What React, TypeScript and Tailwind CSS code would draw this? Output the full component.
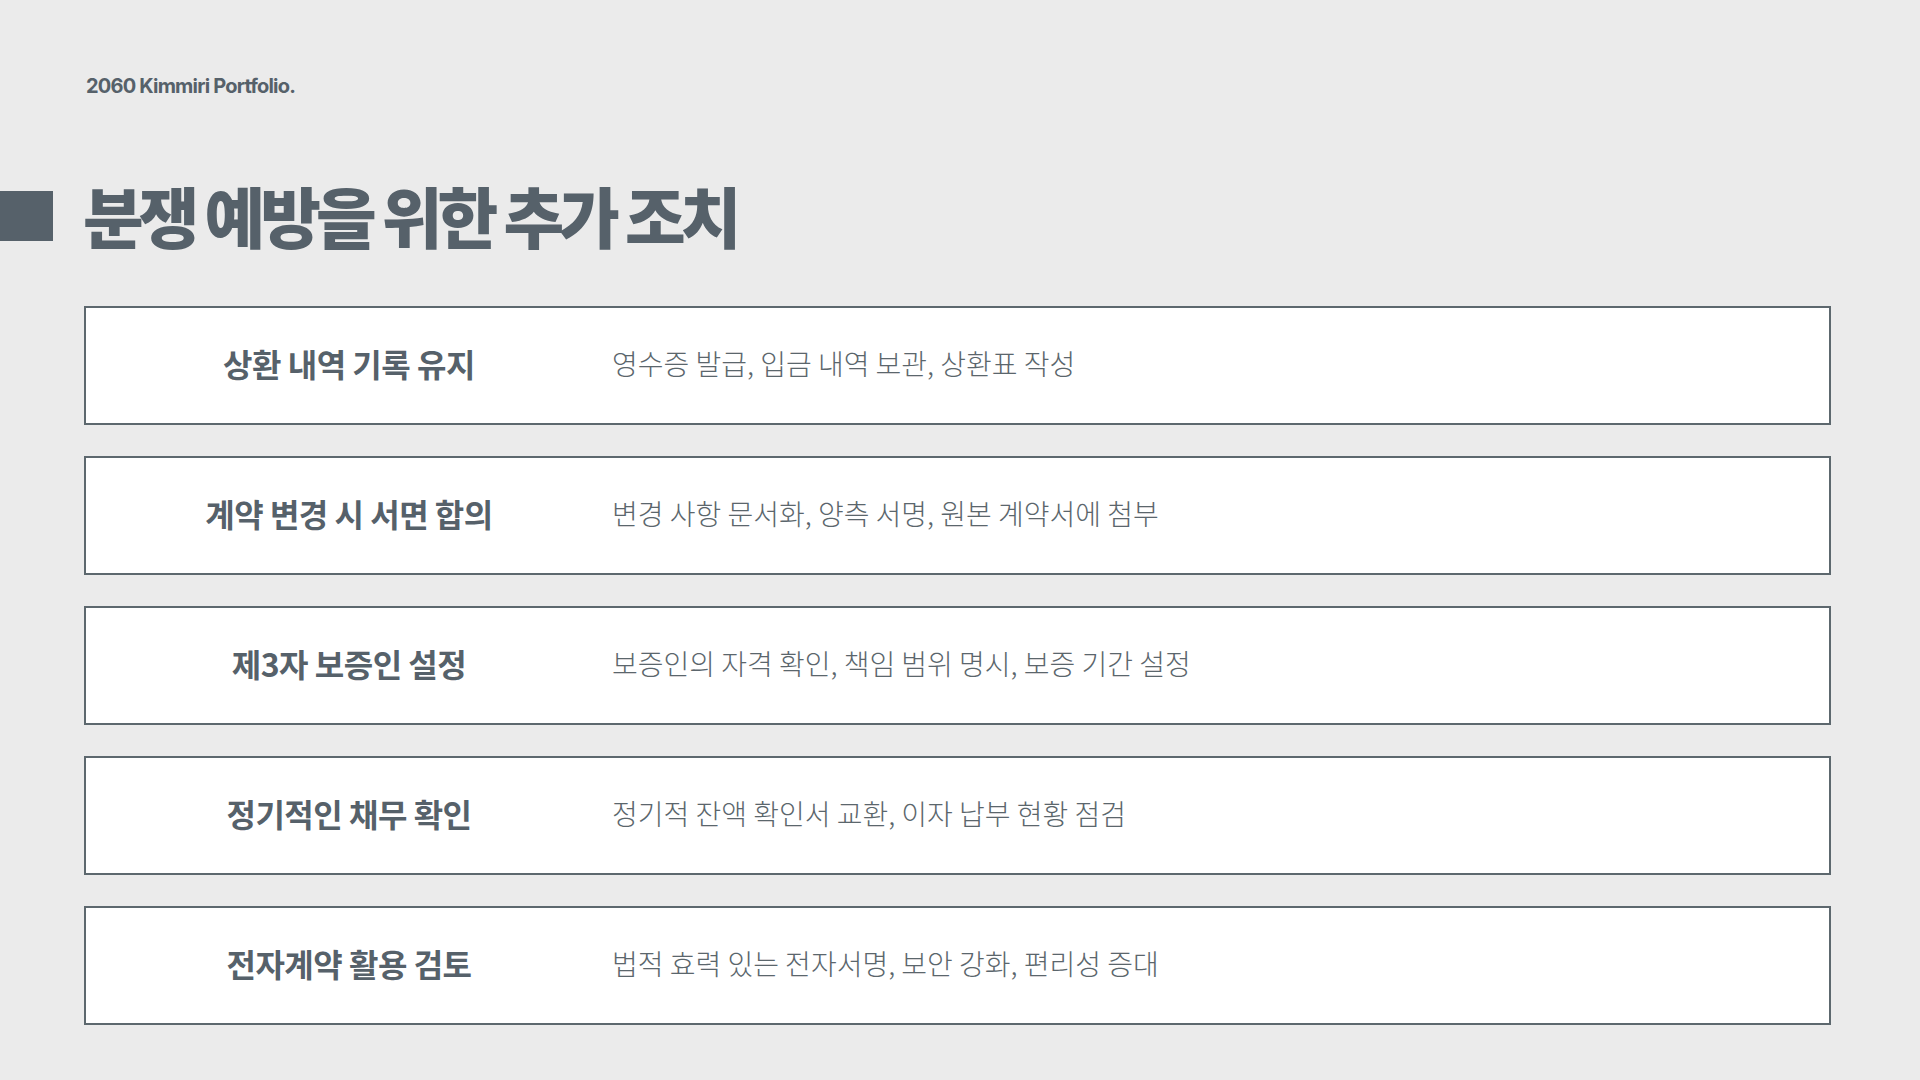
const items = [
  { label: "상환 내역 기록 유지", desc: "영수증 발급, 입금 내역 보관, 상환표 작성" },
  { label: "계약 변경 시 서면 합의", desc: "변경 사항 문서화, 양측 서명, 원본 계약서에 첨부" },
  { label: "제3자 보증인 설정", desc: "보증인의 자격 확인, 책임 범위 명시, 보증 기간 설정" },
  { label: "정기적인 채무 확인", desc: "정기적 잔액 확인서 교환, 이자 납부 현황 점검" },
  { label: "전자계약 활용 검토", desc: "법적 효력 있는 전자서명, 보안 강화, 편리성 증대" },
];

export default function App() {
  return (
    <main className="min-h-screen w-full bg-[#ebebeb] font-['Noto_Sans_CJK_KR',sans-serif] text-[#56616a]">
      {/* header */}
      <div className="pl-[86px] pt-[73px] font-['Inter','Noto_Sans_CJK_KR',sans-serif] text-[20px] leading-[26px] font-bold tracking-[-0.8px]">
        2060 Kimmiri Portfolio.
      </div>

      {/* title */}
      <div className="mt-[79px] flex items-center gap-[30px]">
        <div className="mt-[3px] h-[50px] w-[53px] bg-[#56616a]" />
        <h1 className="text-[66px] leading-[72px] font-black tracking-[-5px]">분쟁 예방을 위한 추가 조치</h1>
      </div>

      {/* list */}
      <div className="ml-[84px] mt-[56px] flex w-[1747px] flex-col gap-[31px]">
        {items.map((it) => (
          <div key={it.label} className="flex h-[119px] items-center border-2 border-[#5d686e] bg-white pb-[6px]">
            <div className="w-[526px] text-center text-[32px] font-bold tracking-[-0.5px]">{it.label}</div>
            <div className="flex-1 text-[28px] font-light text-[#5b666c]">{it.desc}</div>
          </div>
        ))}
      </div>
    </main>
  );
}
